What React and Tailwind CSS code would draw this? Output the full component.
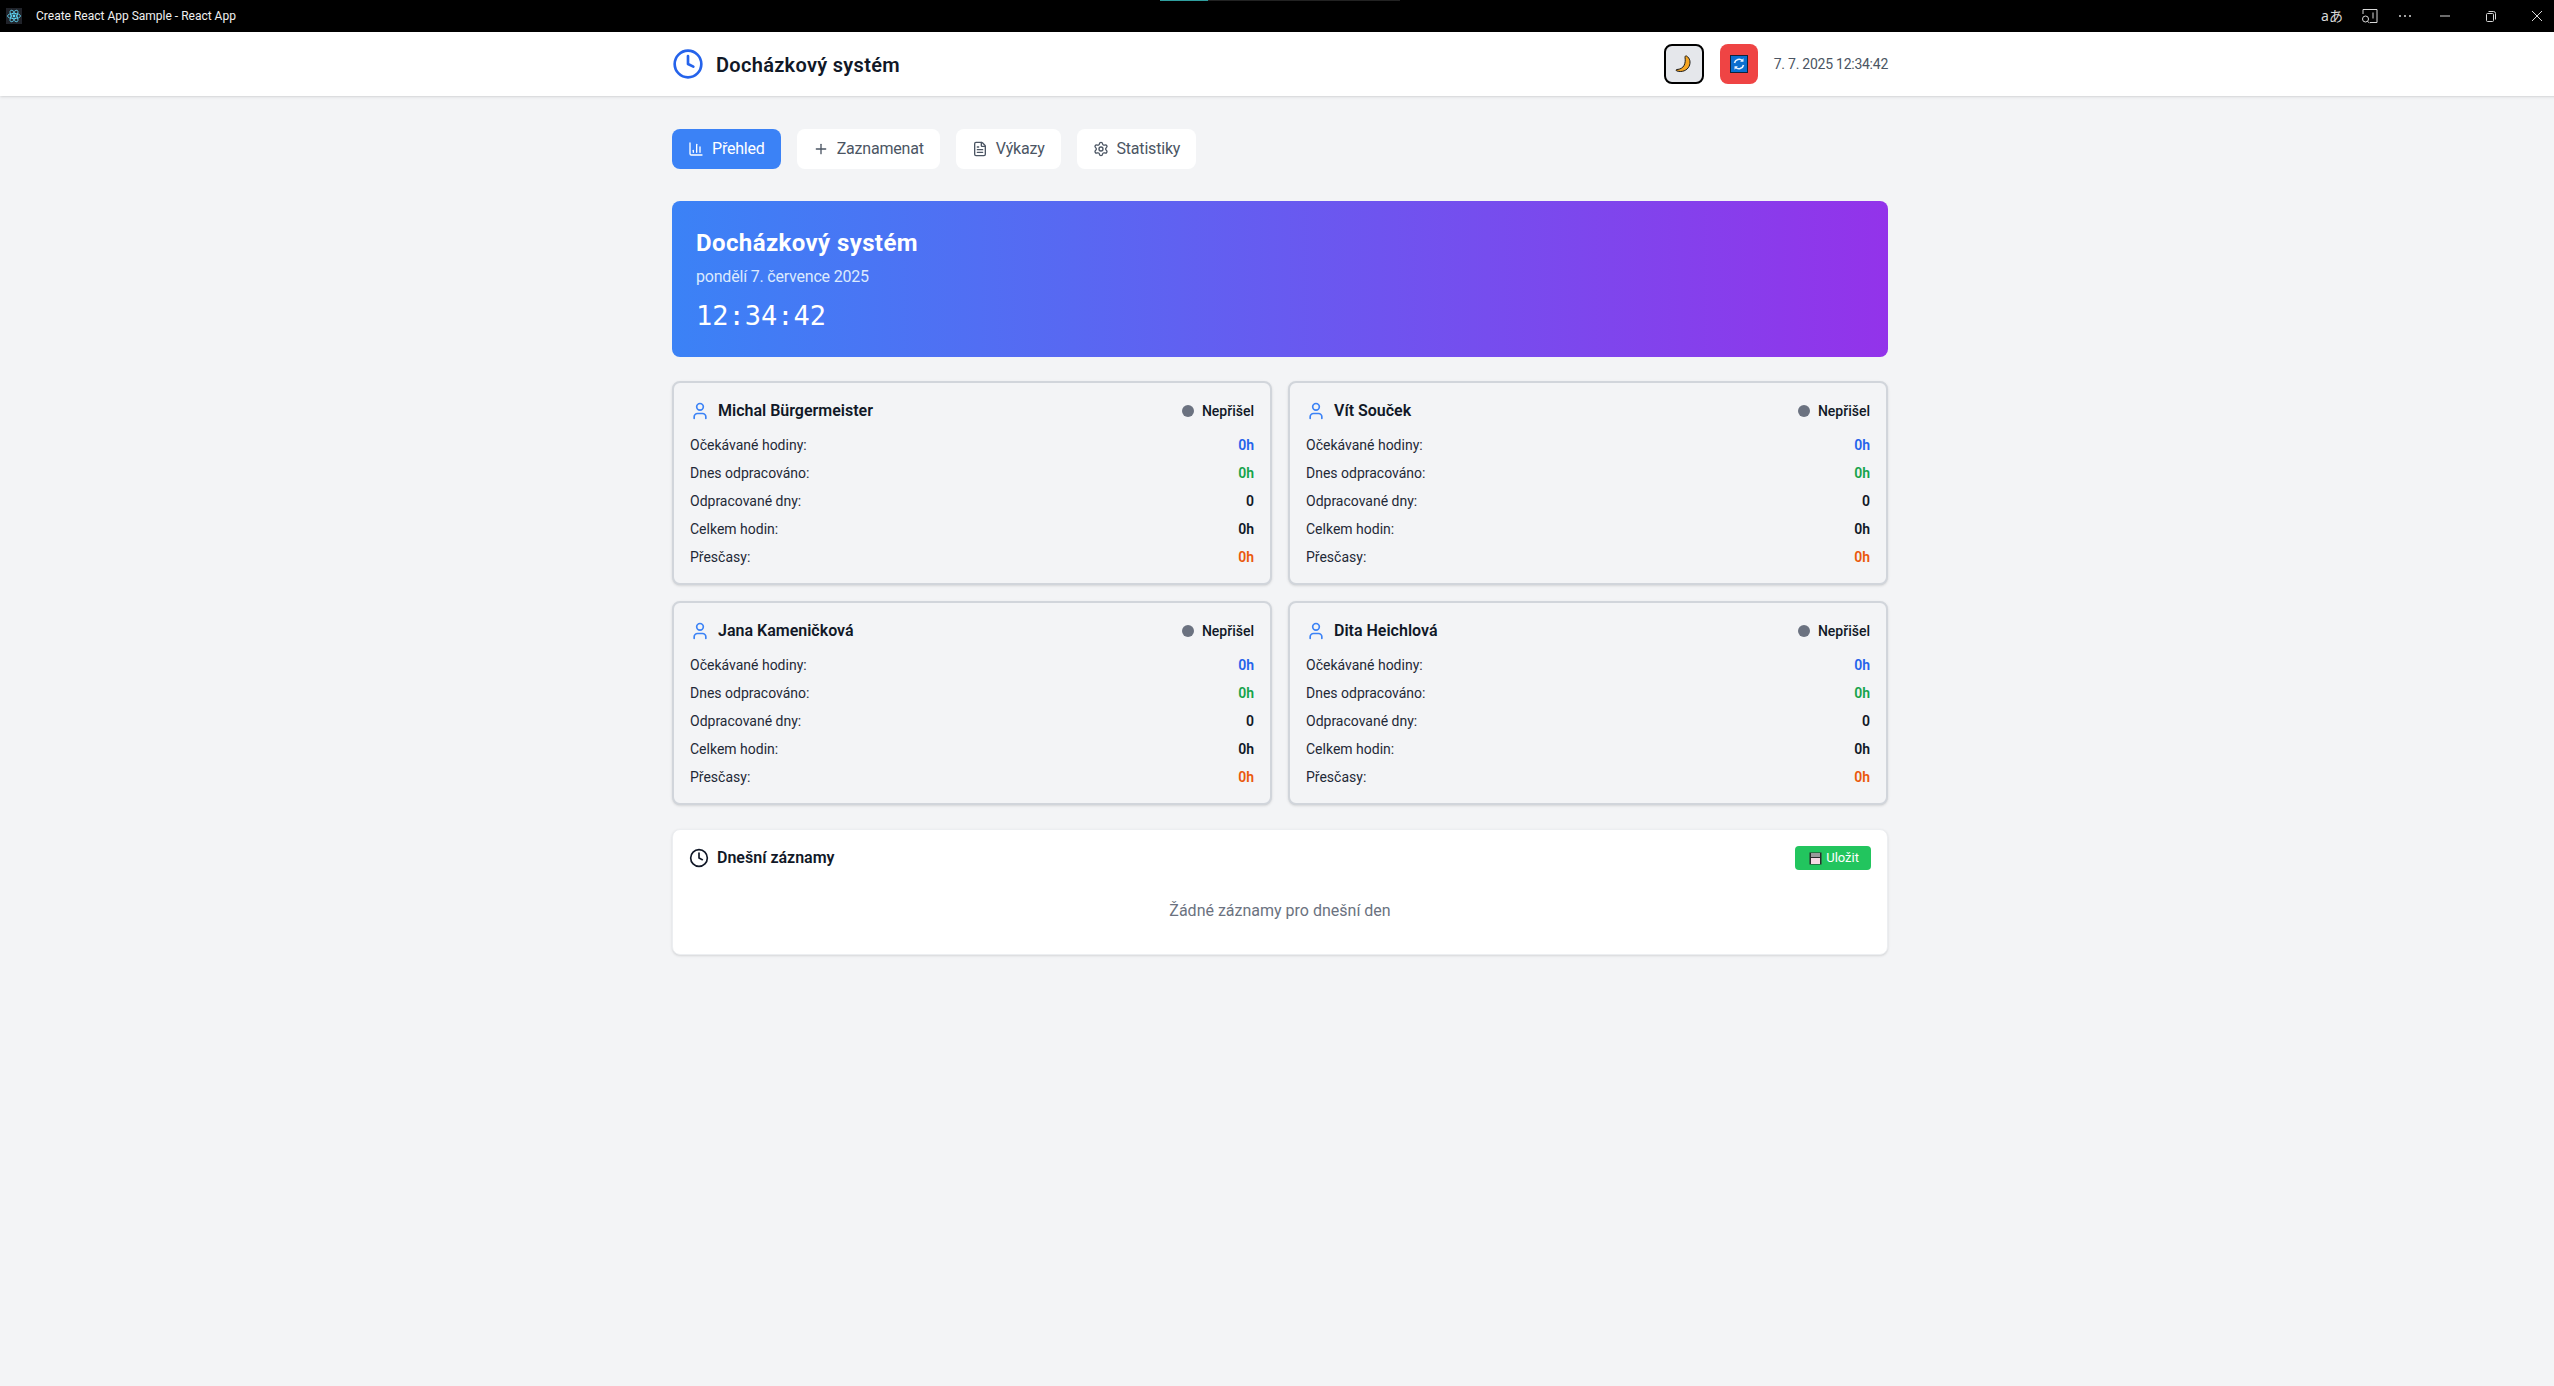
import { ChartColumn, Clock, FileText, Plus, Settings, User } from "lucide-react"

const employees = ["Michal Bürgermeister", "Vít Souček", "Jana Kameničková", "Dita Heichlová"]

const tabs = [
  { label: "Přehled", icon: ChartColumn, active: true },
  { label: "Zaznamenat", icon: Plus },
  { label: "Výkazy", icon: FileText },
  { label: "Statistiky", icon: Settings },
]

const rows = [
  { label: "Očekávané hodiny:", value: "0h", color: "text-[#2563eb]" },
  { label: "Dnes odpracováno:", value: "0h", color: "text-[#16a34a]" },
  { label: "Odpracované dny:", value: "0", color: "text-[#111827]" },
  { label: "Celkem hodin:", value: "0h", color: "text-[#111827]" },
  { label: "Přesčasy:", value: "0h", color: "text-[#ea580c]" },
]

function ReactLogo() {
  return (
    <svg width="16" height="16" viewBox="0 0 16 16" fill="none" className="bg-[#20232a]">
      <circle cx="8" cy="8" r="1.4" fill="#61dafb" />
      <g stroke="#61dafb" strokeWidth="0.8">
        <ellipse cx="8" cy="8" rx="6.5" ry="2.6" />
        <ellipse cx="8" cy="8" rx="6.5" ry="2.6" transform="rotate(60 8 8)" />
        <ellipse cx="8" cy="8" rx="6.5" ry="2.6" transform="rotate(120 8 8)" />
      </g>
    </svg>
  )
}

function TitleBar() {
  return (
    <div className="relative flex h-8 items-center justify-between bg-black pl-[6px] text-white">
      <div className="absolute left-[1160px] top-0 flex h-px">
        <div className="w-12 bg-[#2f9e9e]" />
        <div className="w-[192px] bg-[#222222]" />
      </div>
      <div className="flex items-center gap-[14px]">
        <ReactLogo />
        <span className="text-xs text-[#f0f0f0]">Create React App Sample - React App</span>
      </div>
      <div className="flex items-center text-[#d8d8d8]">
        <span className="w-[40px] text-center text-[14px] leading-4 font-['Noto_Sans','Noto_Sans_CJK_JP',sans-serif]">aあ</span>
        <svg width="36" height="16" viewBox="0 0 36 16" fill="none" stroke="currentColor" strokeWidth="1">
          <path d="M11 6V1.500h14v13h-7" />
          <circle cx="13.500" cy="11" r="3" />
          <path d="M15.500 13.200l2 2M21 4.500v6" />
        </svg>
        <svg width="34" height="16" viewBox="0 0 34 16" fill="currentColor">
          <circle cx="12" cy="8" r="1" />
          <circle cx="17" cy="8" r="1" />
          <circle cx="22" cy="8" r="1" />
        </svg>
        <svg width="46" height="16" viewBox="0 0 46 16" fill="none" stroke="currentColor" strokeWidth="1">
          <path d="M18 8h10" />
        </svg>
        <svg width="46" height="16" viewBox="0 0 46 16" fill="none" stroke="currentColor" strokeWidth="1">
          <rect x="18.500" y="5.500" width="7" height="8" rx="1" />
          <path d="M20.500 3.500h5a2 2 0 0 1 2 2v6" />
        </svg>
        <svg width="46" height="16" viewBox="0 0 46 16" fill="none" stroke="currentColor" strokeWidth="1">
          <path d="M18 3l10 10M28 3L18 13" />
        </svg>
      </div>
    </div>
  )
}

function MoonIcon() {
  return (
    <svg width="20" height="20" viewBox="0 0 20 20">
      <path d="M12.500 2c3.500 2 4.500 6.500 2.500 10.500S8 18.500 3 17c-1.300-.5-1.300-1.300 0-1.500 3-.2 5.700-1.300 7.200-4.300 1.200-2.500 1.200-5.200.8-8 0-1 .7-1.600 1.500-1.200z" fill="#f5a623" stroke="#1a1a1a" strokeWidth="1" />
    </svg>
  )
}

function RefreshIcon() {
  return (
    <svg width="18" height="18" viewBox="0 0 18 18" fill="none">
      <rect x="0.500" y="0.500" width="17" height="17" fill="#0b6fd0" stroke="#10243c" />
      <path d="M4.500 8a4.700 4.700 0 0 1 8-2.300M13.500 10a4.700 4.700 0 0 1-8 2.300" stroke="#e8f4ff" strokeWidth="1.600" />
      <path d="M13.500 3.300v3.400h-3.400zM4.500 14.700v-3.400h3.400z" fill="#e8f4ff" />
    </svg>
  )
}

function FloppyIcon() {
  return (
    <svg width="13" height="13" viewBox="0 0 13 13" className="mr-1">
      <rect x="0.500" y="0.500" width="12" height="12" fill="#2b2b2b" />
      <rect x="2" y="1" width="9" height="4" fill="#9a9a9a" />
      <rect x="2" y="6" width="9" height="6" fill="#f7d9e4" />
    </svg>
  )
}

function EmployeeCard({ name }) {
  return (
    <div className="rounded-lg border-2 border-[#d1d5db] bg-[#f3f4f6] p-4 shadow-sm">
      <div className="mb-3 flex items-center justify-between">
        <div className="flex items-center gap-2">
          <User className="h-5 w-5 text-[#3b82f6]" />
          <h3 className="font-semibold text-[#111827]">{name}</h3>
        </div>
        <div className="flex items-center gap-2">
          <span className="h-3 w-3 rounded-full bg-[#6b7280]" />
          <span className="text-sm font-medium text-[#111827]">Nepřišel</span>
        </div>
      </div>
      <div className="space-y-2 text-sm">
        {rows.map((row) => (
          <div key={row.label} className="flex justify-between">
            <span className="text-[#1f2937]">{row.label}</span>
            <span className={`font-semibold ${row.color}`}>{row.value}</span>
          </div>
        ))}
      </div>
    </div>
  )
}

function App() {
  return (
    <div className="min-h-screen w-[2554px] overflow-hidden bg-[#f3f4f6]">
      {/* the captured window is a bit wider than the page, its right edge gets cut */}
      <div className="w-[2560px] font-['Roboto',sans-serif]">
        <TitleBar />

        <header className="bg-white shadow-sm">
          <div className="mx-auto flex h-16 max-w-7xl items-center justify-between px-8">
            <div className="flex items-center gap-3">
              <Clock className="h-8 w-8 text-[#2563eb]" />
              <h1 className="pt-0.5 text-xl font-semibold tracking-[0.3px] text-[#111827]">Docházkový systém</h1>
            </div>
            <div className="flex items-center gap-4">
              <button className="flex h-10 w-10 items-center justify-center rounded-lg border-2 border-black bg-[#e5e7eb]">
                <MoonIcon />
              </button>
              <button className="flex h-10 w-[38px] items-center justify-center rounded-lg bg-[#ef4444]">
                <RefreshIcon />
              </button>
              <span className="text-sm tracking-[-0.25px] text-[#4b5563]">7. 7. 2025 12:34:42</span>
            </div>
          </div>
        </header>

        <main className="mx-auto max-w-7xl px-8 pt-[33px] pb-8">
          <nav className="mb-8 flex gap-4">
            {tabs.map((tab) => {
              const Icon = tab.icon
              return (
                <button
                  key={tab.label}
                  className={
                    tab.active
                      ? "flex h-10 items-center gap-2 rounded-lg bg-[#3b82f6] px-4 tracking-[-0.2px] text-white"
                      : "flex h-10 items-center gap-2 rounded-lg bg-white px-4 tracking-[-0.2px] text-[#4b5563]"
                  }
                >
                  <Icon className="h-4 w-4" />
                  {tab.label}
                </button>
              )
            })}
          </nav>

          <section className="mb-6 rounded-lg bg-linear-to-r/srgb from-[#3b82f6] to-[#9333ea] p-6 text-white">
            <h2 className="mb-[6px] pt-[2px] text-2xl font-bold tracking-[0.4px]">Docházkový systém</h2>
            <p className="tracking-[-0.2px] text-[#dbeafe]">pondělí 7. července 2025</p>
            <p className="mt-[10px] font-['DejaVu_Sans_Mono',monospace] text-[27px] leading-[34px]">12:34:42</p>
          </section>

          <div className="mb-6 grid grid-cols-2 gap-4">
            {employees.map((name) => (
              <EmployeeCard key={name} name={name} />
            ))}
          </div>

          <section className="rounded-lg border border-[#eceef1] bg-white p-4 shadow-sm">
            <div className="mb-3 flex items-center justify-between">
              <div className="flex items-center gap-2">
                <Clock className="h-5 w-5 text-[#111827]" />
                <h3 className="font-semibold text-[#111827]">Dnešní záznamy</h3>
              </div>
              <button className="flex h-6 items-center rounded bg-[#22c55e] pl-[14px] pr-3 text-[13px] text-white">
                <FloppyIcon />
                Uložit
              </button>
            </div>
            <p className="pt-[17px] pb-[15px] text-center text-[#6b7280]">Žádné záznamy pro dnešní den</p>
          </section>
        </main>
      </div>
    </div>
  )
}

export default App
